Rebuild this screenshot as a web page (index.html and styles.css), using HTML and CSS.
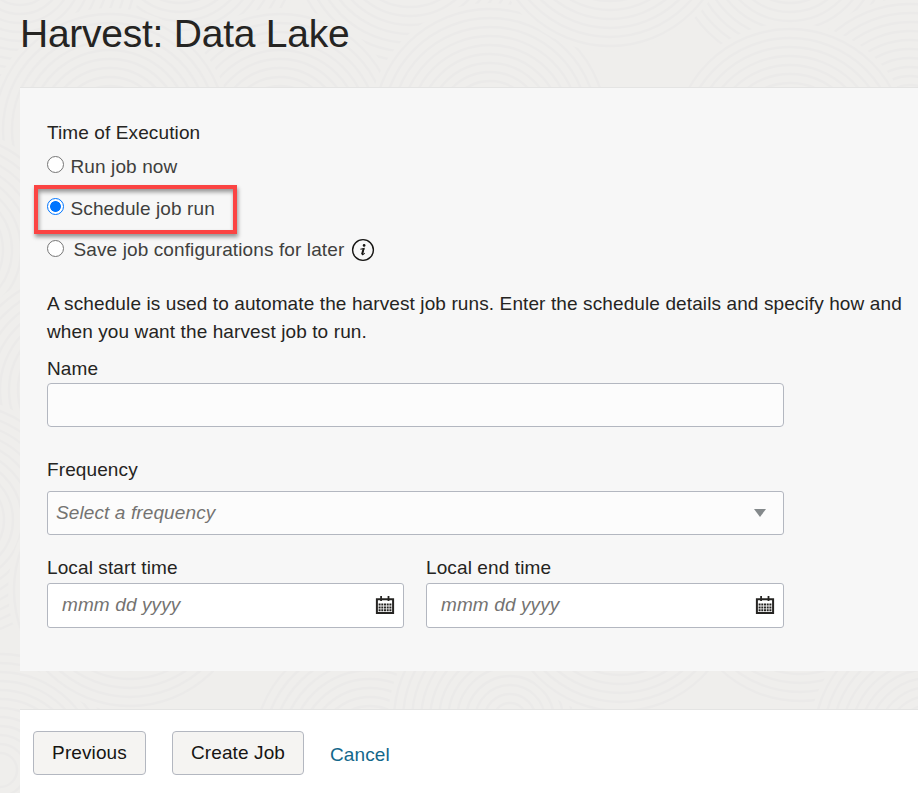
FILE: index.html
```html
<!DOCTYPE html>
<html lang="en">
<head>
<meta charset="utf-8">
<title>Harvest: Data Lake</title>
<link rel="stylesheet" href="styles.css">
</head>
<body>
<svg class="texture" width="918" height="793" aria-hidden="true">
  <defs>
    <g id="rings">
      <circle r="122" class="disc"/>
      <circle r="116"/><circle r="107"/><circle r="98"/><circle r="89"/><circle r="80"/><circle r="71"/>
      <circle r="62"/><circle r="53"/><circle r="44"/><circle r="35"/><circle r="26"/><circle r="17"/>
    </g>
  </defs>
  <use href="#rings" x="180" y="-50"/>
  <use href="#rings" x="410" y="-55"/>
  <use href="#rings" x="790" y="-50"/>
  <use href="#rings" x="910" y="120"/>
  <use href="#rings" x="20" y="-30"/>
  <use href="#rings" x="280" y="130"/>
  <use href="#rings" x="490" y="125"/>
  <use href="#rings" x="610" y="-70"/>
  <use href="#rings" x="790" y="145"/>
  <use href="#rings" x="110" y="130"/>
  <use href="#rings" x="-50" y="250"/>
  <use href="#rings" x="80" y="390"/>
  <use href="#rings" x="-40" y="520"/>
  <use href="#rings" x="0" y="770"/>
  <use href="#rings" x="370" y="750"/>
  <use href="#rings" x="510" y="720"/>
  <use href="#rings" x="130" y="590"/>
  <use href="#rings" x="620" y="595"/>
  <use href="#rings" x="800" y="585"/>
  <use href="#rings" x="930" y="740"/>
</svg>
<main class="page">
  <h1 class="title">Harvest: Data Lake</h1>
  <form class="wizard">
    <section class="panel">
      <div class="group-label">Time of Execution</div>
      <label class="option option-now"><input class="radio" type="radio" name="when"><span>Run job now</span></label>
      <label class="option option-schedule"><input class="radio" type="radio" name="when" checked><span>Schedule job run</span></label>
      <label class="option option-save"><input class="radio" type="radio" name="when"><span class="save-text">Save job configurations for later</span>
        <svg class="info" width="24" height="24" viewBox="0 0 24 24"><circle cx="12" cy="12" r="10.4" fill="none" stroke="#161513" stroke-width="1.4"/><circle cx="13.1" cy="7.4" r="1.35"/><path d="M9.4 11.2 13.1 10.5 11.3 16.2Q11.2 17 12 16.6L13.7 15.2" fill="none" stroke="#161513" stroke-width="1.1"/><path d="M12.5 10.7 11 16.3" stroke="#161513" stroke-width="1.8"/></svg>
      </label>
      <p class="help">A schedule is used to automate the harvest job runs. Enter the schedule details and specify how and<br>when you want the harvest job to run.</p>
      <div class="field">
        <div class="label">Name</div>
        <div class="control name-control"></div>
      </div>
      <div class="field frequency">
        <div class="label">Frequency</div>
        <div class="control select"><span class="placeholder">Select a frequency</span><svg width="12" height="8" viewBox="0 0 12 8"><path d="M0 0H12L6 8Z" fill="#84898b"/></svg></div>
      </div>
      <div class="dates">
        <div class="field">
          <div class="label">Local start time</div>
          <div class="control date"><span class="placeholder">mmm dd yyyy</span><svg class="calendar" width="20" height="20" viewBox="0 0 20 20"><path d="M1.9 4.2H18.1V18H1.9Z" fill="#fff" stroke="#252422" stroke-width="2"/><path d="M6.1 1V6M13.5 1V6" stroke="#252422" stroke-width="1.8"/><path d="M3.6 9.5H16.4M3.6 12.5H16.4M3.6 15.3H16.4" stroke="#252422" stroke-width="2" stroke-dasharray="2 .7"/></svg></div>
        </div>
        <div class="field">
          <div class="label">Local end time</div>
          <div class="control date"><span class="placeholder">mmm dd yyyy</span><svg class="calendar" width="20" height="20" viewBox="0 0 20 20"><path d="M1.9 4.2H18.1V18H1.9Z" fill="#fff" stroke="#252422" stroke-width="2"/><path d="M6.1 1V6M13.5 1V6" stroke="#252422" stroke-width="1.8"/><path d="M3.6 9.5H16.4M3.6 12.5H16.4M3.6 15.3H16.4" stroke="#252422" stroke-width="2" stroke-dasharray="2 .7"/></svg></div>
        </div>
      </div>
    </section>
    <footer class="actions">
      <button class="button previous" type="button">Previous</button>
      <button class="button create" type="button">Create Job</button>
      <a class="cancel">Cancel</a>
    </footer>
  </form>
</main>
</body>
</html>
```

FILE: styles.css
```css
*, *::before, *::after { box-sizing: border-box; }

body {
  margin: 0;
  height: 793px;
  overflow: hidden;
  background: #efeeec;
  color: #252422;
  font: 19px/28px "Liberation Sans", Arial, sans-serif;
  letter-spacing: .11px;
}

.texture {
  position: absolute;
  inset: 0;
  z-index: -1;
  fill: none;
  stroke: #ebeae9;
  stroke-width: 2.4;
}

.disc { fill: #efeeec; stroke: none; }

.page {
  display: flex;
  flex-direction: column;
  height: 793px;
  padding-left: 20px;
}

.title {
  height: 87px;
  margin: 0;
  padding-top: 11px;
  font-size: 39px;
  line-height: 46px;
  font-weight: 400;
  letter-spacing: -.25px;
}

.wizard {
  display: flex;
  flex: 1;
  flex-direction: column;
  gap: 38px;
}

.panel {
  height: 584px;
  padding: 31px 0 0 27px;
  border-top: 1px solid #e4e4e3;
  background: #f7f7f7;
}

.group-label, .option, .help, .label { white-space: nowrap; }

.option {
  position: relative;
  display: flex;
  align-items: flex-start;
  height: 28px;
  color: #403f3d;
}

.option-now { margin-top: 6px; }
.option-schedule { margin-top: 14px; }
.option-save { margin-top: 13px; }
.save-text { margin-left: 3px; }

.option-schedule::after {
  content: "";
  position: absolute;
  top: -10px;
  left: -13px;
  width: 203px;
  height: 49px;
  border: 4px solid #fb4443;
  box-shadow: 1px 3px 4px rgba(0, 0, 0, .4), inset 1px 3px 4px rgba(0, 0, 0, .4);
}

.radio {
  appearance: none;
  width: 17px;
  height: 17px;
  margin: 3px 6.5px 0 0;
  border: 1.3px solid #767676;
  border-radius: 50%;
  background: #fff;
}

.option-save .radio { margin-top: 4px; }

.radio:checked {
  border-color: #0075ff;
  background: radial-gradient(circle, #0075ff 5px, #fff 5.8px);
}

.info {
  margin: 2px 0 0 7px;
  fill: #161513;
}

.help { margin: 26px 0 9px; }

.control {
  display: flex;
  align-items: center;
  justify-content: space-between;
  width: 737px;
  height: 44px;
  border: 1px solid #b3b7c0;
  border-radius: 3px;
  background: #fcfcfc;
}

.name-control { border-radius: 4px; }
.frequency { margin-top: 29px; }
.select { margin-top: 7px; padding: 0 17px 0 8px; }
.placeholder { color: #747371; font-style: italic; }

.dates {
  display: flex;
  gap: 22px;
  margin-top: 19px;
}

.date {
  width: 358px;
  height: 45px;
  margin-top: 1px;
  padding: 0 8px 2px 14px;
  background: #fff;
}

.dates .field:first-child .date { width: 357px; }
.calendar { margin-top: 1px; }

.actions {
  display: flex;
  flex: 1;
  align-items: flex-start;
  padding: 21px 0 0 13px;
  border-top: 1px solid #e4e4e3;
  background: #fff;
}

.button {
  height: 44px;
  padding: 0;
  border: 1px solid #b3b7c0;
  border-radius: 4px;
  background: #f5f4f2;
  color: #161513;
  font: inherit;
  letter-spacing: inherit;
}

.previous { width: 113px; }
.create { width: 132px; margin-left: 26px; }

.cancel {
  margin: 10px 0 0 26px;
  color: #13678b;
}
```
